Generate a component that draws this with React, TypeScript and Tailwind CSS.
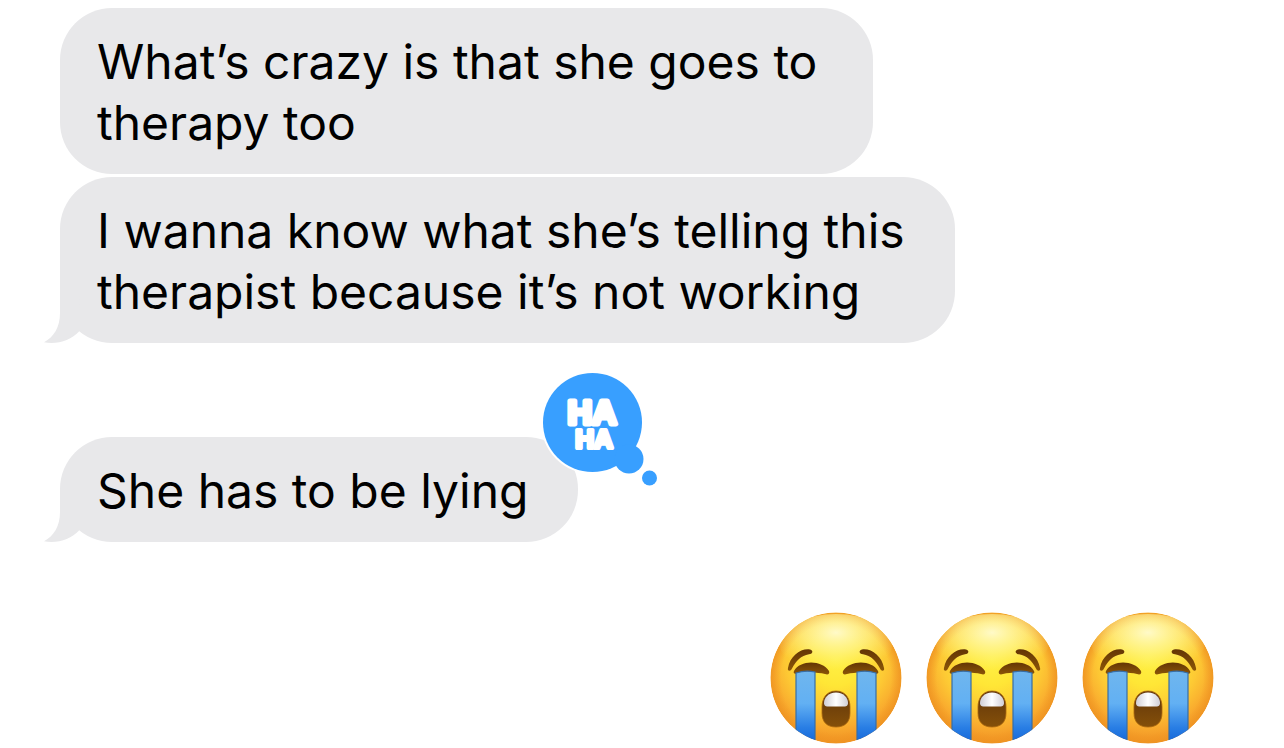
import type { ReactNode } from "react";

function Tail() {
  return (
    <svg
      aria-hidden="true"
      viewBox="0 0 36 52"
      className="absolute bottom-0 -left-4 h-13 w-9 text-[#e8e8ea]"
    >
      <path
        d="M16 0 V22 C16 36 10 46 0 51.2 C13 54 27 49 35 40.4 L36 0 Z"
        fill="currentColor"
      />
    </svg>
  );
}

function Haha() {
  return (
    <svg
      role="img"
      aria-label="Haha reaction"
      viewBox="0 0 118 118"
      className="absolute -top-[66px] -right-[81px] size-[118px]"
    >
      <circle cx="51.5" cy="51.5" r="51.5" fill="#fff" />
      <g fill="#389fff">
        <circle cx="51.5" cy="51.5" r="49.5" />
        <circle cx="88" cy="88" r="14.5" />
        <circle cx="108.5" cy="107" r="7.5" />
      </g>
      <g
        fill="#fff"
        stroke="#fff"
        strokeLinejoin="round"
        fontFamily="Liberation Sans, Arial, sans-serif"
        fontWeight="700"
        textAnchor="middle"
      >
        <text x="51" y="53" fontSize="34" strokeWidth="5">
          HA
        </text>
        <text x="53" y="77" fontSize="26" strokeWidth="4">
          HA
        </text>
      </g>
    </svg>
  );
}

function Bubble({
  children,
  tail = false,
  reaction = false,
  className = "",
}: {
  children: ReactNode;
  tail?: boolean;
  reaction?: boolean;
  className?: string;
}) {
  return (
    <div
      className={`relative w-fit rounded-[52px] bg-[#e8e8ea] pt-[23px] pb-[21px] pl-[37px] ${className}`}
    >
      {tail && <Tail />}
      <p className="relative">{children}</p>
      {reaction && <Haha />}
    </div>
  );
}

function SobDefs() {
  return (
    <svg aria-hidden="true" className="absolute size-0">
      <defs>
        <radialGradient id="face" cx="66" cy="48" r="86" gradientUnits="userSpaceOnUse">
          <stop offset="0" stopColor="#fff044" />
          <stop offset="0.3" stopColor="#ffe636" />
          <stop offset="0.58" stopColor="#fdc934" />
          <stop offset="0.78" stopColor="#f9ab2e" />
          <stop offset="1" stopColor="#ee8b22" />
        </radialGradient>
        <radialGradient id="rim" cx="66" cy="66" r="65.5" gradientUnits="userSpaceOnUse">
          <stop offset="0.84" stopColor="#f29a22" stopOpacity="0" />
          <stop offset="1" stopColor="#ee9422" stopOpacity="0.85" />
        </radialGradient>
        <radialGradient id="shine" cx="0.5" cy="0.3" r="0.6">
          <stop offset="0" stopColor="#fffbd0" stopOpacity="0.95" />
          <stop offset="0.5" stopColor="#fff8a8" stopOpacity="0.55" />
          <stop offset="1" stopColor="#fff280" stopOpacity="0" />
        </radialGradient>
        <linearGradient id="tear" x1="0" y1="60" x2="0" y2="130" gradientUnits="userSpaceOnUse">
          <stop offset="0" stopColor="#6fb6ee" />
          <stop offset="0.45" stopColor="#62b0f3" />
          <stop offset="0.8" stopColor="#287de4" />
          <stop offset="1" stopColor="#1768d9" />
        </linearGradient>
        <linearGradient id="mouth" x1="0" y1="0" x2="0" y2="1">
          <stop offset="0" stopColor="#60350b" />
          <stop offset="1" stopColor="#855009" />
        </linearGradient>
        <linearGradient id="teeth" x1="0" y1="0" x2="1" y2="0">
          <stop offset="0" stopColor="#d0ced6" />
          <stop offset="0.5" stopColor="#fff" />
          <stop offset="1" stopColor="#d0ced6" />
        </linearGradient>
        <linearGradient id="brow" x1="0" y1="0" x2="0" y2="1">
          <stop offset="0" stopColor="#633505" />
          <stop offset="1" stopColor="#8b5507" />
        </linearGradient>
        <clipPath id="disc">
          <circle cx="66" cy="66" r="65.5" />
        </clipPath>
      </defs>
    </svg>
  );
}

function EyeSide() {
  return (
    <>
      <path
        d="M18 56 C20 44 31 36 40 37.5 C44 39 42.5 42 39 42.3 C31 43.5 26 49 22 56.5 C20.5 60 17 59 18 56 Z"
        fill="url(#brow)"
      />
      <path
        d="M24 59 C30 47.5 52 47.5 59 59 C60 62 58 63 55 62 C47 60 34 60 27 62 C24 62 23 61 24 59 Z"
        fill="url(#brow)"
      />
      <path
        d="M26 61 Q35 58 45 60 V132 H26 Z"
        fill="url(#tear)"
        stroke="#376da5"
        strokeWidth="1.2"
      />
    </>
  );
}

function Sob() {
  return (
    <svg role="img" aria-label="Loudly crying face" viewBox="0 0 132 132" className="size-[132px]">
      <g clipPath="url(#disc)">
        <circle cx="66" cy="66" r="65.5" fill="url(#face)" />
        <circle cx="66" cy="66" r="65.5" fill="url(#rim)" />
        <ellipse cx="66" cy="33" rx="56" ry="31" fill="url(#shine)" />
        <EyeSide />
        <g transform="matrix(-1 0 0 1 132 0)">
          <EyeSide />
        </g>
        <path
          d="M66 79 C76 79 80 87 80 95 V101 C80 110 75 115 66 115 C57 115 52 110 52 101 V95 C52 87 56 79 66 79 Z"
          fill="url(#mouth)"
          stroke="#a8660e"
          strokeWidth="0.8"
        />
        <path
          d="M66 80.5 C74 80.5 78 86 78 91 C78 94 76 94.5 73 94.5 H59 C56 94.5 54 94 54 91 C54 86 58 80.5 66 80.5 Z"
          fill="url(#teeth)"
        />
      </g>
    </svg>
  );
}

export default function App() {
  return (
    <main className="min-h-screen bg-white pt-2 pr-[70px] pb-1 pl-[60px] font-['Inter','Liberation_Sans',sans-serif] text-[48px] leading-[61px] text-black">
      <SobDefs />
      <div className="flex flex-col items-start gap-[3px]">
        <Bubble className="pr-[56px]">
          What’s crazy is that she goes to
          <br />
          therapy too
        </Bubble>
        <Bubble tail className="pr-[50px]">
          I wanna know what she’s telling this
          <br />
          therapist because it’s not working
        </Bubble>
      </div>
      <div className="mt-[94px]">
        <Bubble tail reaction className="pr-[50px]">
          She has to be lying
        </Bubble>
      </div>
      <div className="mt-[70px] flex justify-end gap-6">
        <Sob />
        <Sob />
        <Sob />
      </div>
    </main>
  );
}
